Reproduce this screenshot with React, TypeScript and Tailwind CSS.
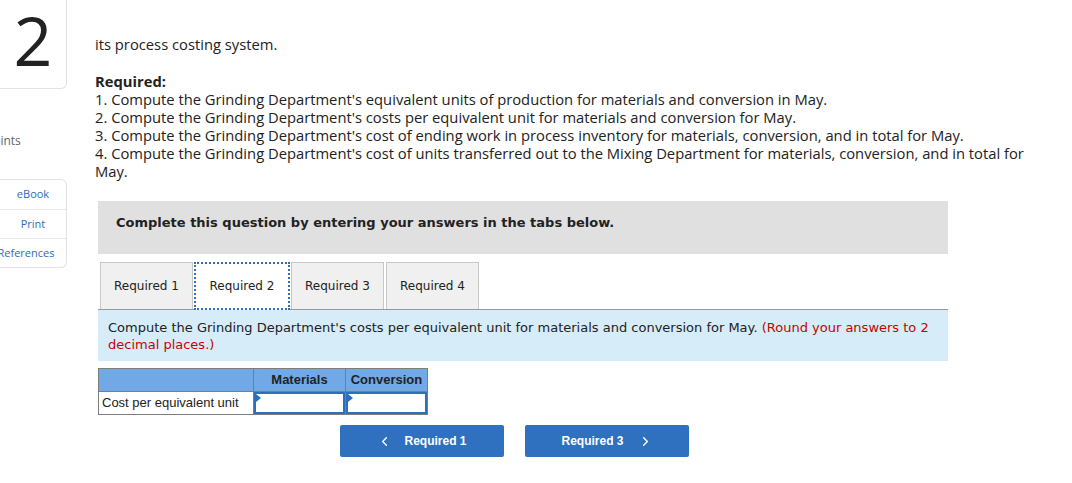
import { ChevronLeft, ChevronRight } from 'lucide-react';

const body = { fontFamily: '"Open Sans", "Liberation Sans", sans-serif' };
const verdana = { fontFamily: '"DejaVu Sans", Verdana, sans-serif' };
const arial = { fontFamily: '"Liberation Sans", Arial, sans-serif' };

const tabs = [
  { label: 'Required 1', w: 'w-[93px]' },
  { label: 'Required 2', w: 'w-[96px]' },
  { label: 'Required 3', w: 'w-[93px]' },
  { label: 'Required 4', w: 'w-[93px] ml-[1px]' },
];

export default function App() {
  return (
    <div className="flex w-[1072px] h-[483px] bg-white overflow-hidden text-[#222]" style={body}>
      {/* Left rail */}
      <div className="w-[67px] shrink-0 flex flex-col">
        <div className="h-[89px] border-r border-b border-[#e3e3e3] rounded-br-md flex items-start justify-center">
          <span className="text-[68px] leading-[80px] text-[#222] font-normal" style={body}>2</span>
        </div>
        <div className="mt-[44px] text-[12px] leading-[16px] text-[#666] -ml-[14px]">Points</div>
        <div className="mt-[30px] border-r border-t border-b border-[#e3e3e3] rounded-r-md flex flex-col text-[11px] text-[#2a6ebb] overflow-hidden">
          <div className="h-[30px] flex items-center justify-center border-b border-[#e6e6e6]">eBook</div>
          <div className="h-[29px] flex items-center justify-center border-b border-[#e6e6e6]">Print</div>
          <div className="h-[28px] flex items-center justify-center whitespace-nowrap -ml-[14px]">References</div>
        </div>
      </div>

      {/* Main */}
      <div className="pl-[28px] pt-[35px] w-[975px] shrink-0">
        <div className="text-[14.75px] leading-[18px]">its process costing system.</div>
        <div className="mt-[19px] text-[14.75px] leading-[18px] w-[940px]">
          <div className="font-bold">Required:</div>
          <div>1. Compute the Grinding Department's equivalent units of production for materials and conversion in May.</div>
          <div>2. Compute the Grinding Department's costs per equivalent unit for materials and conversion for May.</div>
          <div>3. Compute the Grinding Department's cost of ending work in process inventory for materials, conversion, and in total for May.</div>
          <div>4. Compute the Grinding Department's cost of units transferred out to the Mixing Department for materials, conversion, and in total for May.</div>
        </div>

        <div className="ml-[3px] w-[850px]">
          <div className="mt-[21px] h-[53px] bg-[#e0e0e0] pl-[18px] pt-[13px] text-[13px] leading-[17px] font-bold" style={verdana}>
            Complete this question by entering your answers in the tabs below.
          </div>

          {/* Tabs */}
          <div className="mt-[8px] flex items-end gap-[1px] pl-[2px] border-b border-[#999]" style={verdana}>
            {tabs.map((t, i) =>
              i === 1 ? (
                <div key={t.label} className={`${t.w} h-[48px] -mb-[1px] bg-white border-2 border-dotted border-[#2d6fbd] flex items-center justify-center text-[12px]`}>
                  {t.label}
                </div>
              ) : (
                <div key={t.label} className={`${t.w} h-[47px] bg-[#f0f0f0] border border-b-0 border-[#c8c8c8] flex items-center justify-center text-[12px]`}>
                  {t.label}
                </div>
              )
            )}
          </div>

          <div className="h-[51px] bg-[#d6ecf9] pl-[10px] pr-[8px] pt-[9px] text-[13px] leading-[17px]" style={verdana}>
            Compute the Grinding Department's costs per equivalent unit for materials and conversion for May.{' '}
            <span className="text-[#cc0000]">(Round your answers to 2 decimal places.)</span>
          </div>

          {/* Table */}
          <table className="mt-[7px] border-collapse text-[13px]" style={arial}>
            <thead>
              <tr className="bg-[#70a9e6] h-[23px]">
                <th className="w-[155px] border border-[#7d7d7d]"></th>
                <th className="w-[92px] border border-[#7d7d7d] font-bold text-center text-[#222]">Materials</th>
                <th className="w-[82px] border border-[#7d7d7d] font-bold text-center text-[#222]">Conversion</th>
              </tr>
            </thead>
            <tbody>
              <tr className="h-[23px]">
                <td className="border border-[#7d7d7d] pl-[3px] whitespace-nowrap">Cost per equivalent unit</td>
                {[0, 1].map((k) => (
                  <td key={k} className="border border-[#7d7d7d] p-0">
                    <div className="relative h-[22px] border-2 border-[#2d6fbd] bg-white">
                      <div className="absolute left-0 top-0 w-0 h-0 border-t-[4px] border-b-[4px] border-l-[5px] border-t-transparent border-b-transparent border-l-[#2d6fbd]" />
                    </div>
                  </td>
                ))}
              </tr>
            </tbody>
          </table>

          {/* Nav buttons */}
          <div className="mt-[10px] ml-[242px] flex gap-[21px] text-white text-[12px] font-bold" style={arial}>
            <div className="w-[164px] h-[32px] bg-[#2f71bf] rounded-[2px] flex items-center justify-center gap-[12px]">
              <ChevronLeft size={15} strokeWidth={2.25} />
              <span>Required 1</span>
            </div>
            <div className="w-[164px] h-[32px] bg-[#2f71bf] rounded-[2px] flex items-center justify-center gap-[14px]">
              <span>Required 3</span>
              <ChevronRight size={15} strokeWidth={2.25} />
            </div>
          </div>
        </div>
      </div>
    </div>
  );
}
